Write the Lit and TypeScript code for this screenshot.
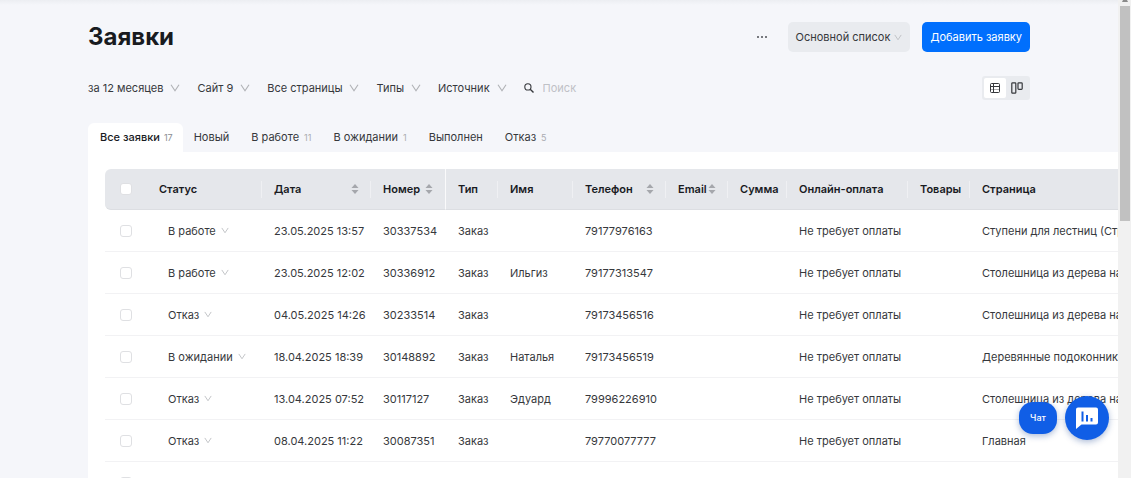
import { LitElement, html, css, nothing } from "lit";
import { customElement } from "lit/decorators.js";

interface Column {
  title: string;
  width: number;
  sortable?: boolean;
  pinned?: boolean;
}

interface Lead {
  status: string;
  date: string;
  number: string;
  type: string;
  name: string;
  phone: string;
  payment: string;
  page: string;
}

const FILTERS = ["за 12 месяцев", "Сайт 9", "Все страницы", "Типы", "Источник"];

const TABS: { title: string; count?: number }[] = [
  { title: "Все заявки", count: 17 },
  { title: "Новый" },
  { title: "В работе", count: 11 },
  { title: "В ожидании", count: 1 },
  { title: "Выполнен" },
  { title: "Отказ", count: 5 },
];

const COLUMNS: Column[] = [
  { title: "Статус", width: 115 },
  { title: "Дата", width: 109, sortable: true },
  { title: "Номер", width: 75, sortable: true, pinned: true },
  { title: "Тип", width: 52 },
  { title: "Имя", width: 75 },
  { title: "Телефон", width: 93, sortable: true },
  { title: "Email", width: 62, sortable: true },
  { title: "Сумма", width: 59 },
  { title: "Онлайн-оплата", width: 121 },
  { title: "Товары", width: 62 },
  { title: "Страница", width: 240 },
];

const PAY = "Не требует оплаты";
const LEADS: Lead[] = [
  { status: "В работе", date: "23.05.2025 13:57", number: "30337534", type: "Заказ", name: "", phone: "79177976163", payment: PAY, page: "Ступени для лестниц (Страница)" },
  { status: "В работе", date: "23.05.2025 12:02", number: "30336912", type: "Заказ", name: "Ильгиз", phone: "79177313547", payment: PAY, page: "Столешница из дерева на заказ" },
  { status: "Отказ", date: "04.05.2025 14:26", number: "30233514", type: "Заказ", name: "", phone: "79173456516", payment: PAY, page: "Столешница из дерева на заказ" },
  { status: "В ожидании", date: "18.04.2025 18:39", number: "30148892", type: "Заказ", name: "Наталья", phone: "79173456519", payment: PAY, page: "Деревянные подоконники и" },
  { status: "Отказ", date: "13.04.2025 07:52", number: "30117127", type: "Заказ", name: "Эдуард", phone: "79996226910", payment: PAY, page: "Столешница из дерева на заказ" },
  { status: "Отказ", date: "08.04.2025 11:22", number: "30087351", type: "Заказ", name: "", phone: "79770077777", payment: PAY, page: "Главная" },
  { status: "", date: "", number: "", type: "", name: "", phone: "", payment: "", page: "" },
];

const chevron = html`<svg class="chevron" viewBox="0 0 10 8" aria-hidden="true">
  <path d="M1 .8 5 6.8 9 .8" fill="none" stroke="currentColor" stroke-width="1.1" />
</svg>`;

const sorter = html`<svg class="sorter" viewBox="0 0 8 12" aria-hidden="true">
  <path d="M4 1 7.5 5H.5zM4 11 .5 7h7z" fill="currentColor" />
</svg>`;

@customElement("app-root")
export class AppRoot extends LitElement {
  static styles = css`
    :host {
      display: flex;
      height: 100vh;
      overflow: hidden;
      background: #f5f6fa;
      color: #36383c;
      font: 11px/16px Inter, "Noto Sans", sans-serif;
    }
    * {
      box-sizing: border-box;
    }
    button,
    input {
      font: inherit;
      color: inherit;
      border: 0;
      background: none;
      margin: 0;
      padding: 0;
    }
    .page {
      flex: 1;
      min-width: 0;
      overflow: hidden;
      padding: 22px 0 0 88px;
      background: linear-gradient(#eceef2, #f5f6fa 5px);
    }
    .head,
    .filters {
      display: flex;
      align-items: center;
      margin-right: 88px;
    }
    .head {
      height: 30px;
      gap: 12px;
    }
    h1 {
      flex: 1;
      margin: 0;
      font-size: 24px;
      line-height: 30px;
      font-weight: 700;
      color: #191b1f;
    }
    .more {
      width: 28px;
      height: 30px;
    }
    .more svg {
      display: block;
      width: 12px;
      height: 4px;
      margin: 0 auto;
    }
    .list,
    .add {
      display: flex;
      align-items: center;
      height: 30px;
      padding: 0 8px;
      border-radius: 5px;
      white-space: nowrap;
    }
    .list {
      gap: 4px;
      background: #e9ebef;
    }
    .add {
      background: #006ffd;
      color: #fff;
    }
    .chevron {
      flex: none;
      width: 10px;
      height: 8px;
      color: #b0b2b6;
    }
    .list .chevron,
    .status .chevron {
      width: 8px;
      height: 7px;
      color: #bcbec2;
    }
    .filters {
      height: 24px;
      margin-top: 24px;
      gap: 17px;
    }
    .filter {
      display: flex;
      align-items: center;
      gap: 7px;
      white-space: nowrap;
    }
    .search {
      display: flex;
      align-items: center;
      flex: 1;
      gap: 9px;
    }
    .search svg {
      width: 10px;
      height: 10px;
      flex: none;
    }
    .search input {
      width: 120px;
      outline: 0;
    }
    .search input::placeholder {
      color: #bfc1c6;
      opacity: 1;
    }
    .views {
      display: flex;
      height: 24px;
      padding: 2px;
      border-radius: 3px;
      background: #e9ebef;
    }
    .view {
      display: grid;
      place-items: center;
      width: 22px;
      border-radius: 2px;
    }
    .view.active {
      background: #fff;
    }
    .view svg {
      width: 12px;
      height: 12px;
    }
    .tabs {
      display: flex;
      height: 29px;
      margin-top: 23px;
    }
    .tab {
      display: flex;
      align-items: center;
      gap: 5px;
      padding: 0 11px 2px;
      border-radius: 6px 6px 0 0;
      white-space: nowrap;
    }
    .tab.active {
      gap: 4px;
      background: #fff;
      color: #191b1f;
      font-weight: 500;
      padding-left: 12px;
      padding-right: 10px;
    }
    .count {
      font-size: 9px;
      font-weight: 400;
      color: #8b8d92;
      padding-top: 2px;
    }
    .tab:not(.active) .count {
      color: #aaacb1;
    }
    .panel {
      padding: 17px 0 0 17px;
      background: #fff;
      overflow: hidden;
    }
    table {
      table-layout: fixed;
      width: 100%;
      min-width: max-content;
      border-collapse: separate;
      border-spacing: 0;
    }
    th,
    td {
      height: 42px;
      padding: 0 12px;
      text-align: left;
      white-space: nowrap;
      border-bottom: 1px solid #f2f2f4;
    }
    th {
      height: 41px;
      background: #e5e7eb;
      border-bottom-color: #dcdee2;
      color: #191b1f;
      font-weight: 600;
    }
    th:first-child {
      border-radius: 6px 0 0 6px;
    }
    th.pinned {
      border-right: 1px solid #fafafb;
    }
    th:not(.pinned):not(:last-child):not(:first-child) {
      background: linear-gradient(#eff0f3, #eff0f3) right center / 1px 17px no-repeat #e5e7eb;
    }
    .pick {
      padding: 0 0 0 15px;
    }
    .pick input {
      appearance: none;
      display: block;
      width: 12px;
      height: 12px;
      border: 1px solid #dfe0e3;
      border-radius: 3px;
      background: #fff;
    }
    .title {
      display: flex;
      align-items: center;
      justify-content: space-between;
    }
    .sorter {
      width: 8px;
      height: 12px;
      color: #a5a7ac;
      flex: none;
    }
    .status {
      display: flex;
      align-items: center;
      gap: 5px;
      padding-left: 9px;
    }
    .scroll {
      flex: none;
      width: 13px;
      background: #f1f1f1;
      display: flex;
      flex-direction: column;
      align-items: center;
      gap: 4px;
    }
    .scroll svg {
      width: 6px;
      height: 2px;
      flex: none;
    }
    .thumb {
      width: 10px;
      height: 45%;
      background: #c1c1c1;
    }
    .widgets {
      position: absolute;
      right: 22px;
      bottom: 38px;
      display: flex;
      align-items: center;
      gap: 8px;
    }
    .chat,
    .stats {
      background: #105ee6;
      color: #fff;
      box-shadow: 0 2px 6px rgba(16, 60, 140, 0.35);
    }
    .chat {
      width: 38px;
      height: 32px;
      border-radius: 14px;
      font-size: 9px;
      font-weight: 500;
    }
    .stats {
      display: grid;
      place-items: center;
      width: 44px;
      height: 44px;
      border-radius: 50%;
    }
    .stats svg {
      width: 24px;
      height: 24px;
    }
  `;

  private renderHead() {
    return html`
      <header class="head">
        <h1>Заявки</h1>
        <button class="more" aria-label="Ещё">
          <svg viewBox="0 0 12 4"><path d="M1 1h2v2H1zM5 1h2v2H5zM9 1h2v2H9z" fill="#77797e" /></svg>
        </button>
        <button class="list">Основной список ${chevron}</button>
        <button class="add">Добавить заявку</button>
      </header>
    `;
  }

  private renderFilters() {
    return html`
      <div class="filters">
        ${FILTERS.map((f) => html`<button class="filter">${f} ${chevron}</button>`)}
        <label class="search">
          <svg viewBox="0 0 10 10" fill="none" stroke="#36383c">
            <circle cx="3.9" cy="3.9" r="3.1" stroke-width="1.1" />
            <path d="M6.2 6.2 9.5 9.5" stroke-width="1.4" />
          </svg>
          <input type="text" placeholder="Поиск" aria-label="Поиск" />
        </label>
        <div class="views">
          <button class="view active" aria-label="Таблица">
            <svg viewBox="0 0 12 12" fill="none" stroke="#36383c">
              <rect x="1.5" y="1.5" width="9" height="9" rx="1" />
              <path d="M4.5 1.5v9M1.5 4.5h9" />
              <path d="M1.5 7.5h9" stroke-opacity=".4" />
            </svg>
          </button>
          <button class="view" aria-label="Доска">
            <svg viewBox="0 0 12 12" fill="none" stroke="#36383c" stroke-width="1.2">
              <rect x=".8" y=".8" width="4" height="10.4" rx=".8" />
              <rect x="7" y=".8" width="4.2" height="6.6" rx=".8" />
            </svg>
          </button>
        </div>
      </div>
    `;
  }

  private renderTable() {
    return html`
      <table>
        <colgroup>
          <col style="width:42px" />
          ${COLUMNS.map((c) => html`<col style="width:${c.width}px" />`)}
        </colgroup>
        <thead>
          <tr>
            <th class="pick"><input type="checkbox" aria-label="Выбрать все" /></th>
            ${COLUMNS.map(
              (c) => html`<th class=${c.pinned ? "pinned" : ""}>
                <div class="title">${c.title} ${c.sortable ? sorter : nothing}</div>
              </th>`
            )}
          </tr>
        </thead>
        <tbody>
          ${LEADS.map(
            (l) => html`<tr>
              <td class="pick"><input type="checkbox" aria-label="Выбрать заявку ${l.number}" /></td>
              <td><button class="status">${l.status} ${chevron}</button></td>
              <td>${l.date}</td>
              <td>${l.number}</td>
              <td>${l.type}</td>
              <td>${l.name}</td>
              <td>${l.phone}</td>
              <td></td>
              <td></td>
              <td>${l.payment}</td>
              <td></td>
              <td>${l.page}</td>
            </tr>`
          )}
        </tbody>
      </table>
    `;
  }

  render() {
    return html`
      <main class="page">
        ${this.renderHead()} ${this.renderFilters()}
        <nav class="tabs">
          ${TABS.map(
            (t, i) => html`<button class="tab ${i === 0 ? "active" : ""}">
              ${t.title} ${t.count ? html`<span class="count">${t.count}</span>` : nothing}
            </button>`
          )}
        </nav>
        <section class="panel">${this.renderTable()}</section>
      </main>
      <div class="scroll">
        <svg viewBox="0 0 6 2"><path d="M1 0h4l1 2H0z" fill="#8b8b8b" /></svg>
        <div class="thumb"></div>
      </div>
      <div class="widgets">
        <button class="chat">Чат</button>
        <button class="stats" aria-label="Статистика">
          <svg viewBox="0 0 24 24">
            <path d="M3 1.5h18a2 2 0 0 1 2 2v13a2 2 0 0 1-2 2H6.5L1 23V3.5a2 2 0 0 1 2-2z" fill="#fff" />
            <path d="M7.5 5.5v10M12 9v6.5M16.5 12v3.5" stroke="#105ee6" stroke-width="2" fill="none" />
          </svg>
        </button>
      </div>
    `;
  }
}
